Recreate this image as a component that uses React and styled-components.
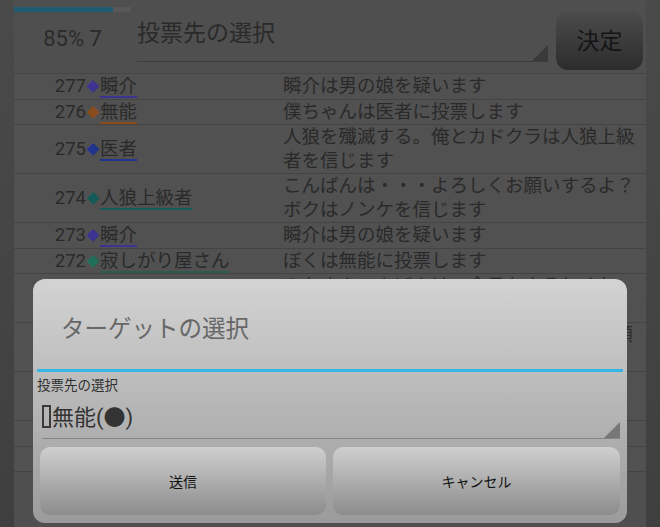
import React from 'react';
import styled, { createGlobalStyle } from 'styled-components';

const GlobalStyle = createGlobalStyle`
  html, body {
    margin: 0;
    padding: 0;
    background: #464646;
  }
  body {
    font-family: Roboto, "Noto Sans CJK JP", sans-serif;
  }
`;

const Page = styled.div`
  width: 660px;
  height: 527px;
  overflow: hidden;
  background: linear-gradient(#4a4a4a, #3f3f3f);
`;

const Column = styled.div`
  margin: 0 14px;
  height: 100%;
  padding-top: 7px;
  box-sizing: border-box;
  background: #4f4f4f;
`;

const Header = styled.div`
  display: flex;
  align-items: flex-start;
  height: 66px;
`;

const Status = styled.div`
  width: 117px;
  display: flex;
  flex-direction: column;
  align-items: center;
`;

const Progress = styled.div`
  width: 100%;
  height: 5px;
  background: #585858;
`;

const ProgressFill = styled.div`
  height: 100%;
  background: #1f5c72;
`;

const StatusText = styled.div`
  margin-top: 14px;
  font-size: 22px;
  color: #2b2b2b;
  line-height: 26px;
`;

const HeaderSelect = styled.div`
  position: relative;
  margin-left: 6px;
  width: 411px;
  height: 55px;
  border-bottom: 1px solid #3d3d3d;
  font-size: 23px;
  line-height: 26px;
  padding-top: 14px;
  box-sizing: border-box;
  color: #2a2a2a;
`;

const Corner = styled.span`
  position: absolute;
  right: 0;
  bottom: 0;
  width: 0;
  height: 0;
  border-left: 16px solid transparent;
  border-bottom: 16px solid ${p => p.color};
`;

const DecideButton = styled.div`
  margin: 4px 0 0 8px;
  width: 87px;
  height: 59px;
  border-radius: 12px;
  background: linear-gradient(#4c4c4c, #2c2c2c);
  display: flex;
  align-items: center;
  justify-content: center;
  padding-bottom: 4px;
  box-sizing: border-box;
  font-size: 23px;
  color: #151515;
`;

const Table = styled.div`
  border-top: 1px solid #454545;
`;

const Row = styled.div`
  display: grid;
  grid-template-columns: 269px 1fr;
  border-bottom: 1px solid #444;
  padding-top: 1px;
  font-size: 18.5px;
  line-height: 23.5px;
  color: #2a2a2a;
  background: #515151;
`;

const NameCell = styled.div`
  display: flex;
  align-items: center;
`;

const Num = styled.span`
  width: 72px;
  text-align: right;
`;

const Diamond = styled.span`
  font-size: 13px;
  color: ${p => p.color};
  width: 14px;
  text-align: center;
`;

const Name = styled.span`
  text-decoration: underline;
  text-decoration-color: ${p => p.color};
  text-decoration-thickness: 2px;
  text-underline-offset: 4px;
`;

const Message = styled.div`
  padding-right: 9px;
`;

const Backdrop = styled.div`
  position: fixed;
  inset: 0;
`;

const Dialog = styled.div`
  margin: 279px 0 0 33px;
  width: 594px;
  height: 244px;
  border-radius: 12px;
  background: linear-gradient(#d3d3d3, #9b9b9b);
  padding: 0 4px;
  box-sizing: border-box;
  display: flex;
  flex-direction: column;
`;

const Title = styled.div`
  height: 90px;
  display: flex;
  align-items: center;
  padding: 6px 0 0 24px;
  box-sizing: border-box;
  font-size: 23.5px;
  color: #676767;
  font-family: "Noto Sans CJK JP", sans-serif;
`;

const Divider = styled.div`
  height: 3px;
  background: #33b5e5;
`;

const Label = styled.div`
  margin-top: 4px;
  font-size: 13.5px;
  line-height: 16px;
  color: #303030;
  font-family: "Noto Sans CJK JP", sans-serif;
`;

const ValueSelect = styled.div`
  position: relative;
  margin: 0 3px 0 5px;
  height: 47px;
  padding-top: 12px;
  box-sizing: border-box;
  border-bottom: 1px solid #858585;
  font-size: 22px;
  line-height: 28px;
  color: #333;
`;

/* the missing-glyph box shown in front of the player name */
const Tofu = styled.span`
  display: inline-block;
  width: 5px;
  height: 19px;
  border: 2px solid #3a3a3a;
  vertical-align: -3px;
  margin-right: 1px;
`;

const Buttons = styled.div`
  display: grid;
  grid-template-columns: 286px 287px;
  gap: 7px;
  margin: 8px 0 0 3px;
`;

const DialogButton = styled.div`
  height: 68px;
  border-radius: 10px;
  background: linear-gradient(#cfcfcf, #8c8c8c);
  display: flex;
  align-items: center;
  justify-content: center;
  font-size: 14px;
  color: #111;
  font-family: "Noto Sans CJK JP", sans-serif;
`;

const rows = [
  { no: 277, name: '瞬介', color: '#3c3490', msg: '瞬介は男の娘を疑います' },
  { no: 276, name: '無能', color: '#8a4c1e', msg: '僕ちゃんは医者に投票します' },
  { no: 275, name: '医者', color: '#23348c', msg: '人狼を殲滅する。俺とカドクラは人狼上級者を信じます' },
  { no: 274, name: '人狼上級者', color: '#165a5a', msg: 'こんばんは・・・よろしくお願いするよ？ボクはノンケを信じます' },
  { no: 273, name: '瞬介', color: '#3c3490', msg: '瞬介は男の娘を疑います' },
  { no: 272, name: '寂しがり屋さん', color: '#1f6e5a', msg: 'ぼくは無能に投票します', faint: true },
  { no: 271, name: 'カドクラ', color: '#6a2a6a', msg: 'みなさんこんばんは。今日もよろしくね。ノンケを信じます' },
  { no: 270, name: 'ノンケ', color: '#2a5a8a', msg: '人狼上級者さんを信じます。よろしくお願いします' },
  { no: 269, name: '男の娘', color: '#8a2a4a', msg: 'こんばんは、よろしくお願いしますね。[占い結果]無能は人間でした' },
  { no: 268, name: '瞬介', color: '#3c3490', msg: 'よろしく' },
  { no: 267, name: '無能', color: '#8a4c1e', msg: 'よろしく' },
];

export default function App() {
  return (
    <>
      <GlobalStyle />
      <Page>
        <Column>
          <Header>
            <Status>
              <Progress>
                <ProgressFill style={{ width: '85%' }} />
              </Progress>
              <StatusText>85% 7</StatusText>
            </Status>
            <HeaderSelect>
              投票先の選択
              <Corner color="#3a3a3a" />
            </HeaderSelect>
            <DecideButton>決定</DecideButton>
          </Header>
          <Table>
            {rows.map(r => (
              <Row key={r.no}>
                <NameCell>
                  <Num>{r.no}</Num>
                  <Diamond color={r.color}>◆</Diamond>
                  <Name color={r.faint ? '#2d5a50' : r.color}>{r.name}</Name>
                </NameCell>
                <Message>{r.msg}</Message>
              </Row>
            ))}
          </Table>
        </Column>
      </Page>
      <Backdrop>
        <Dialog>
          <Title>ターゲットの選択</Title>
          <Divider />
          <Label>投票先の選択</Label>
          <ValueSelect>
            <Tofu />無能(●)
            <Corner color="#777" />
          </ValueSelect>
          <Buttons>
            <DialogButton>送信</DialogButton>
            <DialogButton>キャンセル</DialogButton>
          </Buttons>
        </Dialog>
      </Backdrop>
    </>
  );
}
